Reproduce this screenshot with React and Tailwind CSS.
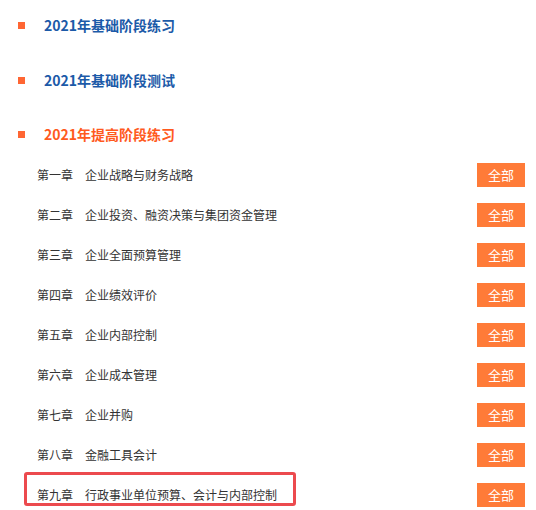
import React from "react";

const headings = [
  { t: "2021年基础阶段练习", c: "text-[#1c5aa8]", m: "" },
  { t: "2021年基础阶段测试", c: "text-[#1c5aa8]", m: "mt-[27px]" },
  { t: "2021年提高阶段练习", c: "text-[#ff5a1e]", m: "mt-[26px]" },
];

const rows = [
  ["第一章", "企业战略与财务战略"],
  ["第二章", "企业投资、融资决策与集团资金管理"],
  ["第三章", "企业全面预算管理"],
  ["第四章", "企业绩效评价"],
  ["第五章", "企业内部控制"],
  ["第六章", "企业成本管理"],
  ["第七章", "企业并购"],
  ["第八章", "金融工具会计"],
  ["第九章", "行政事业单位预算、会计与内部控制"],
];

export default function App() {
  return (
    <div
      className="w-[536px] h-[510px] overflow-hidden bg-white pt-[11px]"
      style={{ fontFamily: '"Noto Sans CJK SC", "Noto Sans", sans-serif' }}
    >
      <div className="flex flex-col">
        {headings.map((h, i) => (
          <div key={i} className={`h-[28px] flex items-center pl-[18px] ${h.m}`}>
            <span className="w-[7px] h-[7px] bg-[#ff6633] shrink-0" />
            <span className={`ml-[19px] text-[14px] font-bold ${h.c}`}>
              {h.t}
            </span>
          </div>
        ))}
      </div>
      <div className="mt-[7px] flex flex-col">
        {rows.map((r, i) => (
          <div key={i} className="relative h-[40px] flex items-center pl-[37px] pr-[11px]">
            <span className="text-[12px] text-[#333333]">{r[0]}</span>
            <span className="ml-[12px] text-[12px] text-[#333333]">{r[1]}</span>
            <span className="ml-auto w-[48px] h-[24px] bg-[#ff7b38] text-white text-[13px] flex items-center justify-center">
              全部
            </span>
            {i === rows.length - 1 && (
              <div className="absolute left-[24px] top-[-3px] w-[272px] h-[34px] border-[3px] border-[#ec4a4e] rounded-[3px]" />
            )}
          </div>
        ))}
      </div>
    </div>
  );
}
